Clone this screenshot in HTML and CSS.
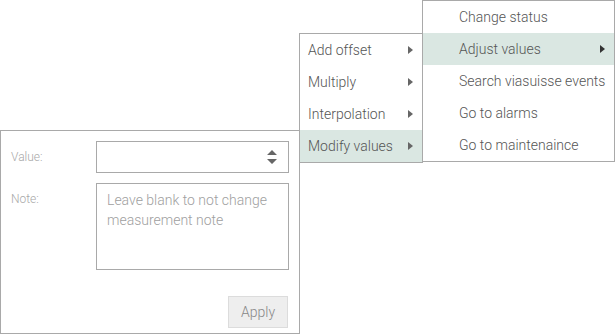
FILE: index.html
```html
<!DOCTYPE html>
<html>
<head>
<meta charset="utf-8">
<link rel="stylesheet" href="styles.css">
</head>
<body>
<div class="canvas">
  <div class="dialog">
    <div class="row">
      <label class="label">Value:</label>
      <div class="number">
        <svg class="spin" width="10" height="14" viewBox="0 0 10 14"><path d="M5 0 L10 5 H0 Z M0 9 H10 L5 14 Z" fill="#666"/></svg>
      </div>
    </div>
    <div class="row">
      <label class="label">Note:</label>
      <div class="textarea">Leave blank to not change measurement note</div>
    </div>
    <div class="actions">
      <button class="apply">Apply</button>
    </div>
  </div>

  <ul class="menu sub">
    <li class="item">Add offset<span class="arrow"></span></li>
    <li class="item">Multiply<span class="arrow"></span></li>
    <li class="item">Interpolation<span class="arrow"></span></li>
    <li class="item active">Modify values<span class="arrow"></span></li>
  </ul>

  <ul class="menu main">
    <li class="item">Change status</li>
    <li class="item active">Adjust values<span class="arrow dark"></span></li>
    <li class="item">Search viasuisse events</li>
    <li class="item">Go to alarms</li>
    <li class="item">Go to maintenaince</li>
  </ul>
</div>
</body>
</html>
```
FILE: styles.css
```css
html, body {
  margin: 0;
  padding: 0;
  background: #fff;
  font-family: Roboto, "Liberation Sans", sans-serif;
}
.canvas {
  position: relative;
  width: 615px;
  height: 334px;
  overflow: hidden;
}
.dialog {
  position: absolute;
  left: 0;
  top: 130px;
  width: 278px;
  height: 192px;
  border: 1px solid #a9a9a9;
  padding: 10px 10px 0 10px;
  box-sizing: content-box;
  display: flex;
  flex-direction: column;
  gap: 10px;
}
.row {
  display: flex;
}
.label {
  width: 85px;
  font-size: 12px;
  font-weight: 300;
  color: #a8a8a8;
  line-height: 32px;
}
.number {
  width: 193px;
  height: 32px;
  border: 1px solid #a9a9a9;
  display: flex;
  align-items: center;
  justify-content: flex-end;
  padding-right: 11px;
  box-sizing: border-box;
}
.textarea {
  width: 193px;
  height: 87px;
  border: 1px solid #a9a9a9;
  box-sizing: border-box;
  padding: 6px 10px;
  font-size: 14px;
  font-weight: 300;
  line-height: 20px;
  color: #a0a0a0;
}
.actions {
  display: flex;
  justify-content: flex-end;
  margin-top: 16px;
}
.apply {
  width: 60px;
  height: 32px;
  margin-right: 1px;
  background: #eeeeee;
  border: 1px solid #dcdcdc;
  color: #888;
  font-family: Roboto, "Liberation Sans", sans-serif;
  font-size: 14px;
  font-weight: 300;
  padding: 0;
}
.menu {
  position: absolute;
  list-style: none;
  margin: 0;
  padding: 0;
  background: #fff;
  border: 1px solid #a9a9a9;
}
.menu .item {
  height: 32px;
  line-height: 32px;
  font-size: 14px;
  font-weight: 300;
  color: #555;
  position: relative;
  white-space: nowrap;
}
.menu .item.active {
  background: #dae7e2;
}
.sub {
  left: 299px;
  top: 33px;
  width: 122px;
}
.sub .item {
  padding-left: 8px;
}
.main {
  left: 422px;
  top: 0;
  width: 191px;
}
.main .item {
  padding-left: 36px;
}
.arrow {
  position: absolute;
  top: 12px;
  right: 9px;
  width: 0;
  height: 0;
  border-top: 4.5px solid transparent;
  border-bottom: 4.5px solid transparent;
  border-left: 5px solid #666;
}
.arrow.dark {
  border-left-color: #333;
}
```
